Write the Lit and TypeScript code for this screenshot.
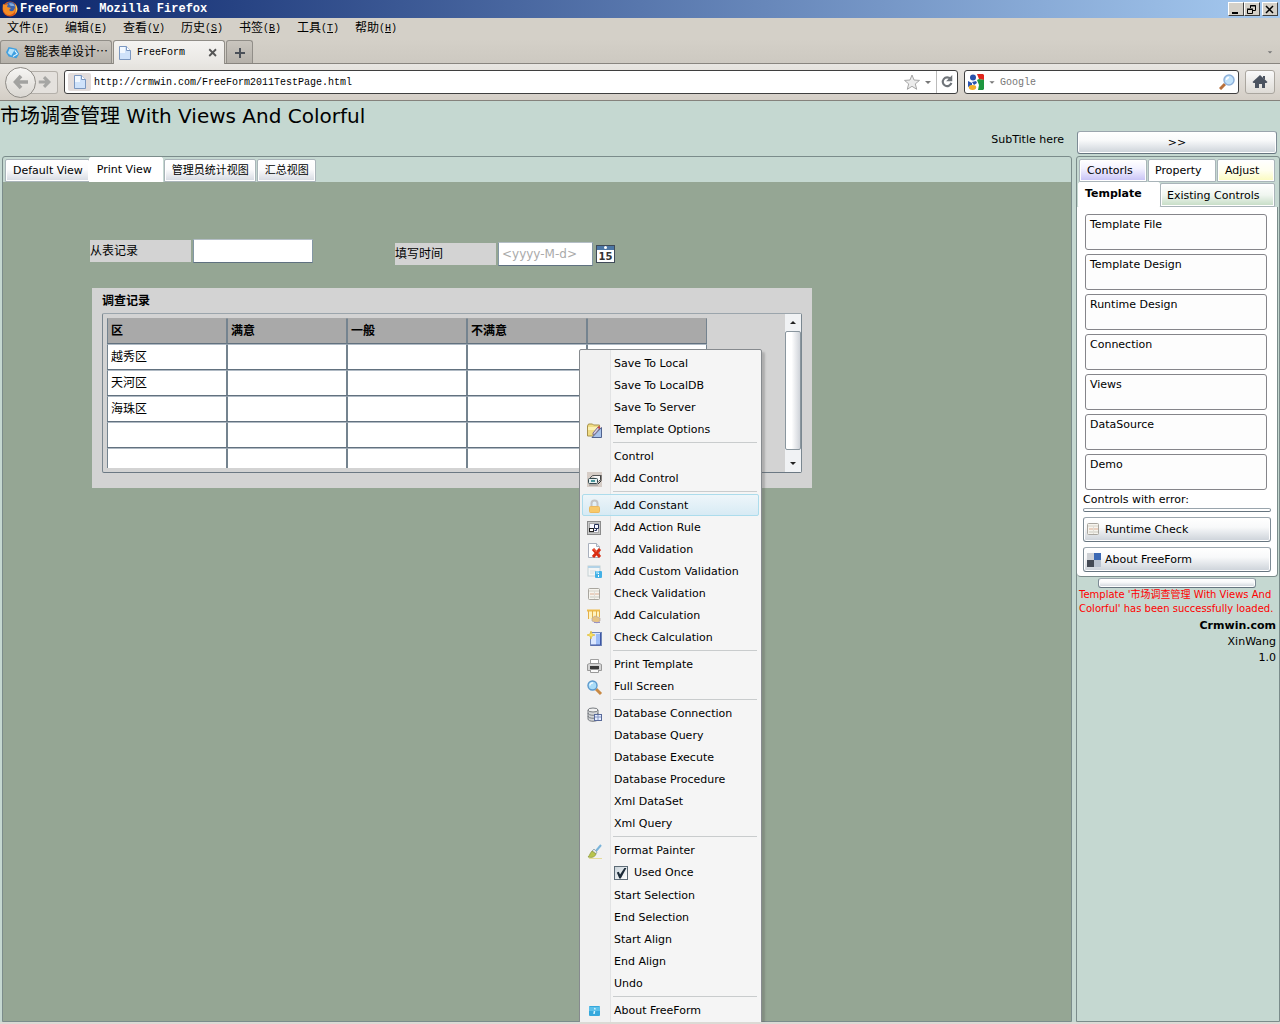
import { LitElement, html, css, svg, nothing, TemplateResult } from "lit";
import { customElement, property, state } from "lit/decorators.js";
import { classMap } from "lit/directives/class-map.js";

type Entry = { label?: string; icon?: string; check?: boolean; hot?: boolean; sep?: boolean };

const MENU: Entry[] = [
  { label: "Save To Local" },
  { label: "Save To LocalDB" },
  { label: "Save To Server" },
  { label: "Template Options", icon: "options" },
  { sep: true },
  { label: "Control" },
  { label: "Add Control", icon: "control" },
  { sep: true },
  { label: "Add Constant", icon: "lock", hot: true },
  { label: "Add Action Rule", icon: "rule" },
  { label: "Add Validation", icon: "invalid" },
  { label: "Add Custom Validation", icon: "custom" },
  { label: "Check Validation", icon: "form" },
  { label: "Add Calculation", icon: "calc" },
  { label: "Check Calculation", icon: "checkcalc" },
  { sep: true },
  { label: "Print Template", icon: "printer" },
  { label: "Full Screen", icon: "lens" },
  { sep: true },
  { label: "Database Connection", icon: "database" },
  { label: "Database Query" },
  { label: "Database Execute" },
  { label: "Database Procedure" },
  { label: "Xml DataSet" },
  { label: "Xml Query" },
  { sep: true },
  { label: "Format Painter", icon: "brush" },
  { label: "Used Once", check: true },
  { label: "Start Selection" },
  { label: "End Selection" },
  { label: "Start Align" },
  { label: "End Align" },
  { label: "Undo" },
  { sep: true },
  { label: "About FreeForm", icon: "info" },
];

const ICONS: Record<string, TemplateResult> = {
  options: svg`
    <path d="M.5 3l1-2h4l1 1h6v9l-2 2H.5z" fill="#f0dc84" stroke="#a8924a"/>
    <path d="M1 4h10v3H1z" fill="#faf0b4"/>
    <path d="M5 14.500l9.500-10v10z" fill="#a9c3ea" stroke="#51638f"/>
    <path d="M6 10l5-6 2 1-5 6-2 1z" fill="#d8d0e8" stroke="#7a6f8c"/>
    <path d="M11 4l2 1" stroke="#c04848" stroke-width="2"/>`,
  control: svg`
    <rect width="15" height="15" fill="#d6cdc7"/>
    <path d="M5.500 3.500h8v4l-2 2M5.500 3.500l-3 3" fill="#f6f6f6" stroke="#555"/>
    <path d="M14 3v6l-3 3" fill="none" stroke="#333"/>
    <rect x="1.500" y="6.500" width="9" height="5" rx="1" fill="#e6f0f0" stroke="#354a50"/>
    <path d="M4 8h4v2H4z" fill="#489499"/><path d="M2 13h9" stroke="#888"/>`,
  lock: svg`
    <path d="M4.500 8V4.500a3 3 0 0 1 6 0V8" fill="none" stroke="#c4c4c4" stroke-width="2"/>
    <rect x="2.500" y="7.500" width="10" height="6" rx="1" fill="#fbcf74" stroke="#eab860"/>
    <path d="M3 9h9M3 11h9M3 13h9" stroke="#f3bb58" stroke-width=".7"/>`,
  rule: svg`
    <rect x=".5" y=".5" width="13" height="13" fill="#c9c9c9" stroke="#8b8b8b"/>
    <rect x="2.500" y="2.500" width="9" height="9" fill="#f8f8ff" stroke="#aaa"/>
    <rect x="2.500" y="7.500" width="4" height="3" fill="#fff" stroke="#222"/>
    <path d="M7.500 3.500h4v4h-4zM7.500 9.500h2V7.500" fill="none" stroke="#243058"/>`,
  invalid: svg`
    <path d="M1.500.5h8l3 3v11h-11z" fill="#fff" stroke="#a9b0bd"/>
    <path d="M9.500.5v3h3" fill="#e4e9f2" stroke="#a9b0bd"/>
    <path d="M6 6l7 8M13 6l-7 8" stroke="#d92d12" stroke-width="3"/>
    <path d="M6.500 6l3 3" stroke="#ff7454"/>`,
  custom: svg`
    <rect x="1" y="1" width="12" height="10" fill="#f3f5f5" stroke="#c6d1d4"/>
    <path d="M1 2h12" stroke="#b2d2e6" stroke-width="2"/><path d="M3 6h6M3 8h4" stroke="#d8dddf"/>
    <rect x="8" y="6" width="7" height="7" rx="1" fill="#44b1e6"/>
    <path d="M9 6h3v3H9z" fill="#86d0f2"/><path d="M11.500 8v1M11.500 10v2" stroke="#fff"/>`,
  form: svg`
    <rect x="1.500" y="1.500" width="11" height="11" rx="1" fill="#f6f4ee" stroke="#a9a69f"/>
    <path d="M2 4h10" stroke="#d6d2c8"/><path d="M3 7h4M8 7h4" stroke="#dcae94"/>
    <path d="M3 10h9" stroke="#c9c9c0"/><path d="M7.500 4v8" stroke="#e0ddd6"/>`,
  calc: svg`
    <path d="M1 1h12v9H1z" fill="#fff3c0"/><path d="M0 1.500h13" stroke="#eebb4a" stroke-width="2"/>
    <path d="M1.500 2v8M5.500 2v8M9.500 2v6M12.500 2v6" stroke="#e3b04a"/>
    <path d="M5 9l3-2 5 2v3l-3 2-5-2z" fill="#e6c384" stroke="#b5a6a4" stroke-width=".7"/>
    <path d="M7 13.500h6" stroke="#9a93c4"/>`,
  checkcalc: svg`
    <rect x="3.500" y="1.500" width="11" height="13" fill="#dce8ff" stroke="#7187b8"/>
    <path d="M9 3h5v11H9z" fill="#9dbdf6"/><path d="M13.500 2v12H4" fill="none" stroke="#3d55a4"/>
    <path d="M4 0l1 3 3 1-3 1-1 3-1-3-3-1 3-1z" fill="#fbe35c" stroke="#dfbd3c" stroke-width=".7"/>`,
  printer: svg`
    <path d="M3.500 6V1.500h8V6" fill="#fff" stroke="#a0a0a0"/>
    <path d="M.5 6.500l2-1h10l2 1v6H.5z" fill="#d4d4d4" stroke="#999"/>
    <path d="M3 8h9v3H3z" fill="#3a3a3a"/><path d="M3.500 11.500h8v3h-8z" fill="#fafafa" stroke="#999"/>`,
  lens: svg`
    <path d="M9 9l5 5" stroke="#c98a45" stroke-width="3"/>
    <circle cx="5.500" cy="5.500" r="4.500" fill="#a9dcf8" stroke="#5a98cc" stroke-width="1.400"/>
    <path d="M3 5.500a2.500 2.500 0 0 1 3-2.500" stroke="#f2fbff" stroke-width="1.500" fill="none"/>`,
  database: svg`
    <path d="M1 3v9c0 3 10 3 10 0V3" fill="#d4d6d8" stroke="#777b80"/>
    <ellipse cx="6" cy="3" rx="5" ry="2" fill="#f2f2f2" stroke="#777b80"/>
    <path d="M1 6c0 3 10 3 10 0M1 9c0 3 10 3 10 0" fill="none" stroke="#777b80"/>
    <rect x="7.500" y="7.500" width="7" height="6" fill="#e5edff" stroke="#596a9a"/>
    <path d="M8 10h6M11 8v5" stroke="#8697c4"/>`,
  brush: svg`
    <path d="M2 14.500h13" stroke="#e6dc9c"/><path d="M14 1L9 7" stroke="#7ab4da" stroke-width="2"/>
    <path d="M7 5l3 3-1 2-4-3z" fill="#e0e4e6" stroke="#8da0a8" stroke-width=".8"/>
    <path d="M5 7l4 3c-1 3-4 4-8 3 2-2 2-4 4-6z" fill="#b8c44c" stroke="#8b9638" stroke-width=".7"/>`,
  info: svg`
    <rect x="2" y="2" width="11" height="10" rx="1" fill="#35a8dc"/>
    <path d="M2 3h11v4H2z" fill="#5cc0ea"/>
    <path d="M8 4l-.3 1.500M7.500 7L7 10" stroke="#d8f4ff" stroke-width="1.500"/>`,
  squares: svg`
    <path d="M1 1h7v7H1z" fill="#cfd2d6"/><path d="M8 1h7v7H8z" fill="#3c69b4"/>
    <path d="M1 8h7v7H1z" fill="#444a54"/><path d="M8 8h7v7H8z" fill="#b9c2cf"/>`,
  page: svg`
    <path d="M2.500 1.500h7l4 4v9h-11z" fill="#cfe2fa" stroke="#7b97c0"/>
    <path d="M9.500 1.500v4h4" fill="#fff" stroke="#7b97c0"/><path d="M3 2h5v6H3z" fill="#f2f8ff"/>`,
  firefox: svg`
    <circle cx="8" cy="8" r="7.500" fill="#d9591a"/>
    <circle cx="8.500" cy="6" r="5" fill="#3b62ac"/><path d="M7 2.500c3-1 5 0 6 3-2-1-3 0-5-1z" fill="#82acdf"/>
    <path d="M1 3l2 1 3-1-1 3 4 1-2 2c3 3 6 0 6-3 1 6-3 8-6 8C2 14 0 8 1 3z" fill="#f48d26"/>
    <path d="M13 3c3 3 3 7 0 10 1-3 1-6 0-10z" fill="#fbd04e"/>`,
  app: svg`
    <path d="M3 1l9 2 3 6-3 5-9-2-3-5z" fill="#3f9fe0"/><path d="M4 3l6 1-4 7-4-3z" fill="#b6e2fb"/>
    <path d="M10 5l3 4-5 3" fill="none" stroke="#e8f6ff" stroke-width="1.200"/>`,
  star: svg`
    <path d="M8 1l2 5 5.500.4-4.200 3.500 1.400 5.400L8 12.300l-4.700 3 1.400-5.400L.5 6.400 6 6z" fill="#ececec" stroke="#a6a6a6"/>`,
  reload: svg`
    <path d="M12 4.500A5 5 0 1 0 13 9" fill="none" stroke="#70757a" stroke-width="2.400"/>
    <path d="M14 0v7H7z" fill="#70757a"/>`,
  google: svg`
    <rect width="16" height="16" rx="1" fill="#fff"/>
    <path d="M9 0h6l1 1v5l-5-1z" fill="#e0251c"/><path d="M9 6l2-1 5 1v9l-1 1h-5l1-5z" fill="#1e963f"/>
    <path d="M0 7l4 2v2l-4 2z" fill="#2c55b0"/>
    <circle cx="5" cy="3.500" r="3" fill="#2a52ac"/>
    <path d="M4 8l4-1 1 2-3 2z" fill="#2a52ac"/><ellipse cx="4.500" cy="13.500" rx="3.700" ry="2.400" fill="#f3ae27"/>`,
  search: svg`
    <path d="M6 10l-5 5" stroke="#b8703c" stroke-width="3"/>
    <circle cx="10" cy="6" r="5" fill="#c2e2fa" stroke="#8fb2dc" stroke-width="1.500"/>
    <path d="M7.500 6A2.500 2.500 0 0 1 10 3.500" stroke="#fff" stroke-width="1.500" fill="none"/>`,
  home: svg`
    <path d="M8 1l7.500 7-1 1H1.500l-1-1z" fill="#4b5360"/><path d="M11 2h2v4l-2-2z" fill="#4b5360"/>
    <path d="M3 9h10v5h-3v-4H7v4H3z" fill="#4b5360"/>`,
  back: svg`
    <path d="M8 2L2.500 8 8 14M3 8h12" fill="none" stroke="#a2a2a0" stroke-width="3.600"/>`,
  forward: svg`
    <path d="M8 2.500L13.500 8 8 13.500M13 8H2" fill="none" stroke="#a6a6a4" stroke-width="3.600"/>`,
  caret: svg`<path d="M5 7h6l-3 3z" fill="#777"/>`,
  up: svg`<path d="M5 9h6L8 6z" fill="#222"/>`,
  down: svg`<path d="M5 6h6L8 9z" fill="#222"/>`,
  close: svg`<path d="M3 3l9 9M12 3l-9 9" stroke="#555" stroke-width="2.400"/>`,
  plus: svg`<path d="M8 3v10M3 8h10" stroke="#4a5058" stroke-width="2"/>`,
  calendar: svg`
    <rect x=".5" y=".5" width="18" height="17" fill="#fff" stroke="#3f4a58"/>
    <path d="M1 1h17v4H1z" fill="#4c76a4"/><circle cx="9.500" cy="2.500" r="1.500" fill="#fff"/>
    <text x="9.500" y="15" text-anchor="middle" class="day">15</text>`,
};

const icon = (name: string, size = 16, w = size) => html`
  <svg class="icon" width=${w} height=${size} viewBox="0 0 ${w > 16 ? w : 16} ${w > 16 ? size : 16}" aria-hidden="true">${ICONS[name]}</svg>`;

const shared = css`
  * { box-sizing: border-box; }
  button, input { font: inherit; color: inherit; margin: 0; }
  button { border: 0; padding: 0; background: none; }
  .icon { display: block; flex: none; }
`;

@customElement("context-menu")
export class ContextMenu extends LitElement {
  @property({ attribute: false }) entries: Entry[] = [];

  static styles = [shared, css`
    :host { display: block; }
    .menu {
      width: 183px; padding: 2px; border: 1px solid #868a8e; border-radius: 2px;
      background: linear-gradient(90deg, #f1f1f1 30px, #e2e3e4 30px, #e2e3e4 31px, #f5f5f5 31px);
      box-shadow: 3px 3px 2px rgba(90, 90, 90, .3);
      font: 11px/20px "DejaVu Sans", "Noto Sans CJK SC", sans-serif;
    }
    .item {
      display: grid; grid-template-columns: 16px 1fr; gap: 11px; align-items: center;
      width: 100%; height: 22px; padding: 1px 0 0 4px; text-align: left; white-space: nowrap;
      border: 1px solid transparent; border-radius: 2px;
    }
    .hot { border-color: #acdcec; background: linear-gradient(rgba(236, 246, 251, .8), rgba(208, 232, 244, .8)); }
    .slot { padding-top: 2px; height: 18px; }
    .check { height: 23px; }
    .check-text { display: flex; align-items: center; gap: 6px; }
    .box {
      appearance: none; width: 14px; height: 14px; border: 1px solid #5d6b76; display: grid;
      background: linear-gradient(135deg, #c9d3da, #fff);
    }
    .box:checked::before {
      content: ""; background: #1c2b38;
      clip-path: polygon(15% 45%, 32% 40%, 42% 62%, 78% 8%, 95% 8%, 48% 95%, 36% 95%);
    }
    .sep { height: 5px; padding: 2px 2px 0 31px; }
    .line { height: 1px; background: #c9cccd; }
  `];

  render() {
    return html`<div class="menu" role="menu">
      ${this.entries.map((e) => e.sep
        ? html`<div class="sep" role="separator"><div class="line"></div></div>`
        : e.check
          ? html`<label class="item check"><span></span><span class="check-text"><input class="box" type="checkbox" checked />${e.label}</span></label>`
          : html`<button role="menuitem" class=${classMap({ item: true, hot: !!e.hot })}>
              <span class="slot">${e.icon ? icon(e.icon) : nothing}</span><span>${e.label}</span></button>`)}
    </div>`;
  }
}

@customElement("app-root")
export class AppRoot extends LitElement {
  @state() private view = 1;

  private menus = [["文件", "F"], ["编辑", "E"], ["查看", "V"], ["历史", "S"], ["书签", "B"], ["工具", "T"], ["帮助", "H"]];
  private views = ["Default View", "Print View", "管理员统计视图", "汇总视图"];
  private groups = ["Template File", "Template Design", "Runtime Design", "Connection", "Views", "DataSource", "Demo"];
  private columns = ["区", "满意", "一般", "不满意", ""];
  private rows = ["越秀区", "天河区", "海珠区", "", ""];

  static styles = [shared, css`
    :host {
      box-sizing: border-box; display: flex; flex-direction: column; height: 100vh; overflow: hidden; color: #000;
      font: 11px/16px "DejaVu Sans", "Noto Sans CJK SC", sans-serif; background: #c5d8d1;
      border-bottom: 2px solid #dcdad5;
    }
    .chrome { flex: none; font: 10px/16px "Liberation Mono", "Noto Sans CJK SC", monospace; background: #d4d0c8; }
    .zh { font-size: 12px; }
    .titlebar {
      display: flex; align-items: center; gap: 2px; height: 18px; padding: 0 2px;
      background: linear-gradient(90deg, #0a246a, #a6caf0); color: #fff;
    }
    .caption { flex: 1; font-size: 12px; font-weight: bold; }
    .winbtn {
      display: grid; place-items: center; width: 16px; height: 14px; background: #d4d0c8;
      border: 1px solid; border-color: #fff #404040 #404040 #fff;
    }
    .winbtns { display: flex; }
    .menubar { display: flex; height: 21px; align-items: center; }
    .menubar-item { display: flex; align-items: center; width: 58px; padding-left: 7px; text-align: left; }
    .strip {
      display: flex; gap: 1px; height: 25px; padding-top: 1px; border-bottom: 1px solid #88857f;
      background: linear-gradient(#d4d0c8, #cdc9c1);
    }
    .btab {
      display: flex; align-items: center; gap: 4px; width: 112px; height: 23px; padding: 2px 5px 0 5px;
      border: 1px solid #918e88; border-bottom: 0; border-radius: 3px 3px 0 0;
      background: linear-gradient(#c9c5be, #b5b1aa); white-space: nowrap; overflow: hidden;
    }
    .btab-on { height: 24px; padding: 1px 5px 0 3px; background: linear-gradient(#f4f3f1, #e9e7e3); }
    .btab-new { width: 27px; }
    .grow { flex: 1; text-align: left; }
    .strip-end { display: flex; align-items: center; margin-left: auto; padding-right: 4px; }
    .nav {
      display: flex; align-items: center; height: 37px; padding: 0 5px; border-bottom: 1px solid #85827c;
      background: linear-gradient(#e8e6e2, #d4cec6);
    }
    .back {
      display: grid; place-items: center; width: 31px; height: 31px; border: 1px solid #8f8c87; border-radius: 50%;
      background: linear-gradient(#f6f5f3, #dad7d2); z-index: 1;
    }
    .fwd {
      display: grid; place-items: center end; width: 27px; height: 23px; margin: 0 6px 0 -5px; padding-right: 6px;
      border: 1px solid #b4b0aa; border-left: 0; border-radius: 0 3px 3px 0; background: #e4e1dd;
    }
    .bar {
      display: flex; align-items: center; height: 24px; background: #fff; border: 1px solid #3f3f3f;
      border-radius: 3px; padding: 0 3px;
    }
    .address { flex: 1; padding: 0 0 0 3px; }
    .favbtn { display: grid; place-items: center; width: 23px; height: 18px; background: #e2dcdb; border-radius: 2px; margin-right: 3px; }
    .text { flex: 1; min-width: 0; border: 0; padding: 1px 0 0; outline: 0; background: none; }
    .text::placeholder { color: #777; opacity: 1; }
    .reload { display: grid; place-items: center; width: 21px; height: 22px; border-left: 1px solid #bbb; }
    .websearch { width: 275px; margin: 0 6px; gap: 1px; }
    .home { display: grid; place-items: center; width: 30px; height: 24px; border: 1px solid #aaa69f; border-radius: 3px; background: linear-gradient(#fafafa, #dedbd6); }

    .page {
      position: relative; flex: 1; min-height: 0; display: grid; overflow: hidden;
      grid-template-columns: minmax(0, 1fr) 204px; grid-template-rows: 55px minmax(0, 1fr); column-gap: 4px;
    }
    .head { display: flex; flex-direction: column; }
    .title { margin: 0; font-size: 20px; font-weight: normal; line-height: 30px; }
    .subtitle { margin: 0; padding: 1px 8px 0; text-align: right; }
    .main { display: flex; flex-direction: column; margin-left: 2px; border: 1px solid #7b8c8b; border-radius: 3px 3px 0 0; }
    .tabs { display: flex; align-items: flex-end; gap: 1px; height: 25px; padding-left: 2px; }
    .tab {
      height: 23px; padding: 1px 6px 0 7px; white-space: nowrap; text-align: left; border: 1px solid #a9b4b9; border-radius: 2px 2px 0 0;
      background: linear-gradient(#fff, #fbfbfc 45%, #d5dae2); box-shadow: inset 0 0 0 1px #fff;
    }
    .tab-on { height: 26px; padding: 0 10px 1px 7px; background: #fff; border-color: #fff; margin: 0 0 -1px -2px; }
    .canvas { flex: 1; background: #95a694; padding: 57px 0 0 87px; }
    .fields { display: flex; gap: 82px; height: 49px; }
    .field { display: flex; align-items: flex-start; gap: 2px; }
    .field-date { padding-top: 3px; }
    .flabel { width: 101px; height: 22px; margin-top: 1px; font-size: 12px; line-height: 23px; background: #d3d3d3; }
    .fbox {
      width: 120px; height: 24px; padding: 0 4px; font-size: 12px; background: #fff; outline: 0;
      border: 1px solid; border-color: #b4bec6 #8397a5 #5f7180;
    }
    .fbox-date { width: 95px; padding-left: 3px; }
    .fbox::placeholder { color: #aaa; opacity: 1; }
    .picker { margin: 3px 0 0 1px; }
    .day { font: bold 10px "DejaVu Sans", sans-serif; fill: #333; }
    .panel { width: 720px; max-width: 100%; height: 200px; margin-left: 2px; padding: 0 10px 15px; background: #d3d3d3; display: flex; flex-direction: column; }
    .ptitle { margin: 0; padding-top: 2px; font-size: 12px; line-height: 23px; }
    .scroller { display: flex; flex: 1; min-height: 0; border: 1px solid; border-color: #9ba5ac #7a8790 #6b7883; border-radius: 2px; }
    .clip { flex: 1; margin: 4px; overflow: hidden; }
    .grid { width: 600px; table-layout: fixed; border-collapse: separate; border-spacing: 0; font-size: 12px; }
    .cell { height: 26px; padding: 0 3px; text-align: left; background: #fff; border: 1px solid; border-color: #b0bac4 #74838f #62717f; }
    .hcell { background: #a9a9a9; border-top-color: #a9a9a9; }
    .vbar { display: flex; flex-direction: column; width: 16px; background: #f0f2f4; }
    .vbtn { height: 17px; }
    .thumb { flex: 1; margin-bottom: 5px; border: 1px solid #8a969e; border-radius: 2px; background: linear-gradient(90deg, #fff 40%, #cfd3d9); }

    .collapse, .cmd, .stub, .empty {
      border: 1px solid; border-color: #9aa5ad #7d8b95 #667580; border-radius: 3px;
      background: linear-gradient(#fff, #f8f9fa 40%, #ccd2d9); box-shadow: inset 0 0 0 1px #fff;
    }
    .collapse { height: 23px; margin: 30px 3px 0 1px; padding-top: 1px; }
    .side { border: 1px solid #7b8c8b; border-radius: 3px 3px 0 0; padding-top: 2px; min-width: 0; }
    .srow { display: flex; gap: 1px; padding: 0 4px 0 2px; height: 23px; }
    .srow-low { gap: 0; padding: 0 4px 0 1px; height: 25px; }
    .violet { width: 68px; background: linear-gradient(#fff, #f3f2ff 40%, #c6c1f5); }
    .white { width: 68px; padding-left: 6px; background: #fff; }
    .yellow { flex: 1; background: linear-gradient(#fff, #fffff0 50%, #fafabe); }
    .green { flex: 1; height: 24px; margin-top: 1px; padding: 1px 0 0 6px; background: linear-gradient(#fff, #f0f6f0 50%, #c4dcc4); }
    .picked { width: 82px; height: 25px; padding: 0 6px 2px; font-weight: bold; border-color: #fff; background: #fff; }
    .sbody { margin: 0 1px 0 0; padding: 7px 5px 4px; background: #fff; border: 1px solid #7b8c8b; border-width: 0 1px 1px 0; border-radius: 0 0 4px 4px; }
    .groups { display: grid; gap: 4px; padding: 0 5px 0 3px; }
    .group { height: 36px; padding: 2px 4px; border: 1px solid #85858a; border-radius: 3px; background: #fdfdfd; display: flex; text-align: left; }
    .error-label { margin: 2px 0 0 1px; }
    .empty { height: 4px; margin: 0 1px; background: #fff; }
    .cmd { display: flex; align-items: center; gap: 3px; width: 188px; height: 25px; margin: 5px 0 0 1px; padding-left: 2px; }
    .stub { height: 10px; margin: 1px 23px 0 21px; }
    .status { margin: 0; padding: 0 0 0 2px; color: #f00; font-size: 10px; line-height: 14px; white-space: nowrap; }
    .credits { margin: 2px 3px 0 0; text-align: right; }
    .brand { font-weight: bold; }
    .credit { margin: 0; }
    .overlay { position: absolute; left: 579px; top: 248px; }
  `];

  private chrome() {
    return html`<header class="chrome" lang="zh-CN">
      <div class="titlebar">
        ${icon("firefox")}<span class="caption">FreeForm - Mozilla Firefox</span>
        <span class="winbtns">
          <button class="winbtn" aria-label="Minimize"><svg class="icon" width="10" height="9"><path d="M1 7h6v2H1z" /></svg></button>
          <button class="winbtn" aria-label="Restore"><svg class="icon" width="10" height="9"><path d="M3.500 3V.5h5v5H6M3 1h6M.5 4.500h5v4h-5zM0 4h6" fill="none" stroke="#000" /></svg></button>
        </span>
        <button class="winbtn" aria-label="Close"><svg class="icon" width="10" height="9"><path d="M1 1l7 7M8 1L1 8" stroke="#000" stroke-width="1.500" /></svg></button>
      </div>
      <nav class="menubar">${this.menus.map(([t, k]) => html`
        <button class="menubar-item"><span class="zh">${t}</span><span>(<u>${k}</u>)</span></button>`)}
      </nav>
      <div class="strip">
        <button class="btab">${icon("app", 14)}<span class="zh">智能表单设计⋯</span></button>
        <button class="btab btab-on">${icon("page")}<span class="grow">FreeForm</span>${icon("close", 12)}</button>
        <button class="btab btab-new" aria-label="New tab">${icon("plus")}</button>
        <span class="strip-end">${icon("caret", 12)}</span>
      </div>
      <div class="nav">
        <button class="back" aria-label="Back">${icon("back")}</button>
        <button class="fwd" aria-label="Forward">${icon("forward", 14)}</button>
        <div class="bar address">
          <span class="favbtn">${icon("page")}</span>
          <input class="text" type="text" aria-label="Address" value="http://crmwin.com/FreeForm2011TestPage.html" />
          ${icon("star")}${icon("caret")}
          <button class="reload" aria-label="Reload">${icon("reload", 14)}</button>
        </div>
        <div class="bar websearch">
          ${icon("google")}${icon("caret", 14)}
          <input class="text" type="text" aria-label="Search" placeholder="Google" />
          ${icon("search")}
        </div>
        <button class="home" aria-label="Home">${icon("home")}</button>
      </div>
    </header>`;
  }

  private form() {
    return html`<section class="canvas">
      <div class="fields">
        <div class="field">
          <label class="flabel" for="record">从表记录</label><input class="fbox" id="record" type="text" />
        </div>
        <div class="field field-date">
          <label class="flabel" for="date">填写时间</label>
          <input class="fbox fbox-date" id="date" type="text" placeholder="&lt;yyyy-M-d&gt;" />
          <button class="picker" aria-label="Calendar">${icon("calendar", 18, 19)}</button>
        </div>
      </div>
      <div class="panel">
        <h2 class="ptitle">调查记录</h2>
        <div class="scroller">
          <div class="clip">
            <table class="grid">
              <thead><tr>${this.columns.map((c) => html`<th class="cell hcell">${c}</th>`)}</tr></thead>
              <tbody>${this.rows.map((r) => html`<tr>${this.columns.map((_, i) => html`<td class="cell">${i ? "" : r}</td>`)}</tr>`)}</tbody>
            </table>
          </div>
          <div class="vbar">
            <button class="vbtn" aria-label="Scroll up">${icon("up")}</button>
            <div class="thumb"></div>
            <button class="vbtn" aria-label="Scroll down">${icon("down")}</button>
          </div>
        </div>
      </div>
    </section>`;
  }

  private side() {
    return html`<aside class="side">
      <div class="srow">
        <button class="tab violet">Contorls</button><button class="tab white">Property</button><button class="tab yellow">Adjust</button>
      </div>
      <div class="srow srow-low">
        <button class="tab picked">Template</button><button class="tab green">Existing Controls</button>
      </div>
      <div class="sbody">
        <div class="groups">${this.groups.map((g) => html`<button class="group">${g}</button>`)}</div>
        <div class="error-label">Controls with error:</div>
        <div class="empty"></div>
        <button class="cmd">${icon("form")}<span>Runtime Check</span></button>
        <button class="cmd">${icon("squares")}<span>About FreeForm</span></button>
      </div>
      <div class="stub"></div>
      <p class="status">Template '市场调查管理 With Views And<br />Colorful' has been successfully loaded.</p>
      <div class="credits">
        <p class="credit brand">Crmwin.com</p><p class="credit">XinWang</p><p class="credit">1.0</p>
      </div>
    </aside>`;
  }

  render() {
    return html`${this.chrome()}
      <main class="page" lang="zh-CN">
        <div class="head">
          <h1 class="title">市场调查管理 With Views And Colorful</h1>
          <p class="subtitle">SubTitle here</p>
        </div>
        <button class="collapse">&gt;&gt;</button>
        <div class="main">
          <div class="tabs">${this.views.map((v, i) => html`
            <button class=${classMap({ tab: true, "tab-on": i === this.view })} @click=${() => (this.view = i)}>${v}</button>`)}
          </div>
          ${this.form()}
        </div>
        ${this.side()}
        <context-menu class="overlay" .entries=${MENU}></context-menu>
      </main>`;
  }
}
